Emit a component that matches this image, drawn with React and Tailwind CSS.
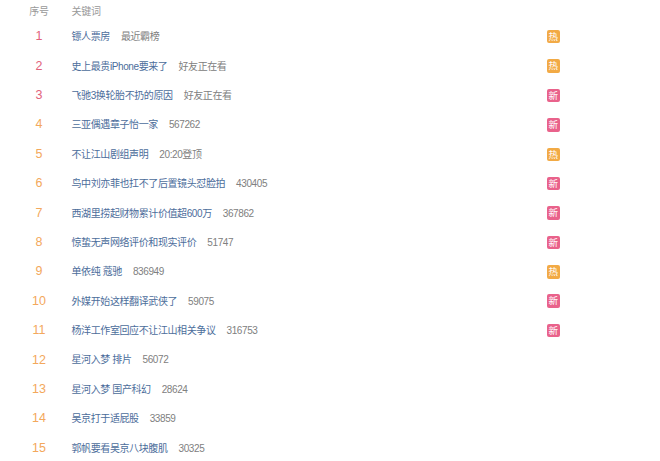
const rows = [
  { word: '镖人票房', extra: '最近霸榜', tag: 'hot' },
  { word: '史上最贵iPhone要来了', extra: '好友正在看', tag: 'hot' },
  { word: '飞驰3换轮胎不扔的原因', extra: '好友正在看', tag: 'new' },
  { word: '三亚偶遇章子怡一家', extra: '567262', tag: 'new' },
  { word: '不让江山剧组声明', extra: '20:20登顶', tag: 'hot' },
  { word: '鸟中刘亦菲也扛不了后置镜头怼脸拍', extra: '430405', tag: 'new' },
  { word: '西湖里捞起财物累计价值超600万', extra: '367862', tag: 'new' },
  { word: '惊蛰无声网络评价和现实评价', extra: '51747', tag: 'new' },
  { word: '单依纯 蔻驰', extra: '836949', tag: 'hot' },
  { word: '外媒开始这样翻译武侠了', extra: '59075', tag: 'new' },
  { word: '杨洋工作室回应不让江山相关争议', extra: '316753', tag: 'new' },
  { word: '星河入梦 排片', extra: '56072' },
  { word: '星河入梦 国产科幻', extra: '28624' },
  { word: '吴京打于适屁股', extra: '33859' },
  { word: '郭帆要看吴京八块腹肌', extra: '30325' },
];

function Tag({ type }) {
  if (!type) return null;
  const hot = type === 'hot';
  return (
    <span
      className={`flex h-[13.5px] w-[13.5px] items-center justify-center rounded-[2px] text-[9.5px] leading-none text-white ${
        hot ? 'bg-[#f2aa45]' : 'bg-[#e9628b]'
      }`}
    >
      {hot ? '热' : '新'}
    </span>
  );
}

export default function App() {
  return (
    <div
      className="h-[461px] w-[660px] overflow-hidden bg-white"
      style={{ fontFamily: '"Liberation Sans", "Noto Sans CJK SC", sans-serif' }}
    >
      {/* header */}
      <div className="flex h-[22px] items-center text-[10px] tracking-[-0.3px] text-[#999999]">
        <span className="w-[58px] pl-[20px] text-center">序号</span>
        <span className="ml-[13.5px]">关键词</span>
      </div>

      {rows.map((r, i) => (
        <div key={i} className="flex h-[29.4px] items-center">
          <span
            className={`w-[58px] pl-[20px] text-center text-[12.5px] font-light ${
              i < 3 ? 'text-[#e2627b]' : 'text-[#f3a85c]'
            }`}
          >
            {i + 1}
          </span>
          <div className="ml-[13.5px] flex w-[475px] items-center text-[10px] tracking-[-0.4px]">
            <span className="text-[#4c6d9b]">{r.word}</span>
            <span className="ml-[11px] text-[#808080]">{r.extra}</span>
          </div>
          <Tag type={r.tag} />
        </div>
      ))}
    </div>
  );
}
